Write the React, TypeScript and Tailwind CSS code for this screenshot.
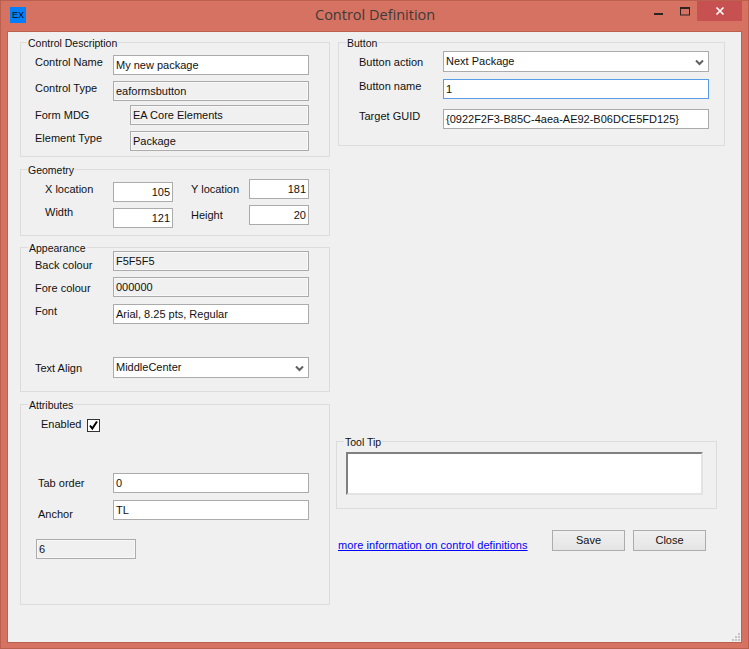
import type { ReactNode } from "react";

function Group({ title, className, legend = "left-[6px]", children }: { title: string; className: string; legend?: string; children?: ReactNode }) {
  return (
    <div className={`relative border border-[#dcdcdc] ${className}`}>
      <span className={`absolute -top-[7px] bg-[#f0f0f0] px-[1px] text-[10.5px] leading-[14px] text-[#111] ${legend}`}>{title}</span>
      {children}
    </div>
  );
}

function Box({ value, className = "", readOnly = false, right = false, focus = false }: { value: string; className?: string; readOnly?: boolean; right?: boolean; focus?: boolean }) {
  return (
    <div className={`h-[20px] shrink-0 border ${focus ? "border-[#569de5]" : "border-[#ababab]"} ${className}`}>
      <div className={`h-[18px] border px-[1px] text-[11px] leading-[16px] text-[#111] whitespace-nowrap overflow-hidden ${readOnly ? "border-[#f8f8f8] bg-[#f0f0f0]" : "border-white bg-white"} ${right ? "text-right" : ""}`}>
        {value}
      </div>
    </div>
  );
}

function Select({ value, className = "" }: { value: string; className?: string }) {
  return (
    <div className={`flex h-[21px] shrink-0 items-center justify-between border border-[#ababab] bg-white pl-[2px] pr-[3px] text-[11px] text-[#111] ${className}`}>
      <span>{value}</span>
      <svg width="9" height="7" viewBox="0 0 9 7" className="mt-[1px] mr-[1px]">
        <path d="M1 1.5 L4.5 5 L8 1.5" fill="none" stroke="#606060" strokeWidth="2" />
      </svg>
    </div>
  );
}

function Label({ text, className = "" }: { text: string; className?: string }) {
  return <span className={`h-[20px] shrink-0 whitespace-nowrap text-[11px] leading-[20px] text-[#111] ${className}`}>{text}</span>;
}

export default function App() {
  return (
    <div className="flex h-[649px] w-[749px] flex-col border border-[#b9604f] bg-[#d67262] font-['Liberation_Sans',Arial,sans-serif]">
      <div className="flex h-[30px] shrink-0 items-start">
        <div className="ml-[9px] mt-[6px] flex h-[16px] w-[16px] items-center justify-center bg-[#0080ff] text-[9px] leading-none text-black">EX</div>
        <div className="ml-[289px] mt-[4px] w-[124px] whitespace-nowrap font-['Open_Sans',sans-serif] text-[14.5px] leading-[20px] text-[#3d3a38]">Control Definition</div>
        <svg width="10" height="3" viewBox="0 0 10 3" className="ml-[215px] mt-[12px]">
          <rect width="9" height="2" y="0" fill="#2b2422" />
        </svg>
        <svg width="11" height="9" viewBox="0 0 11 9" className="ml-[16px] mt-[6px]">
          <rect x="0.5" y="0.5" width="9" height="7.5" fill="none" stroke="#2b2422" />
          <rect x="0" y="0" width="10" height="2" fill="#2b2422" />
        </svg>
        <div className="ml-[6px] flex h-[20px] w-[45px] items-center justify-center bg-[#c75050]">
          <svg width="10" height="10" viewBox="0 0 10 10">
            <path d="M1.5 1.5 L8.5 8.5 M8.5 1.5 L1.5 8.5" stroke="#fff" strokeWidth="1.7" />
          </svg>
        </div>
      </div>

      <div className="relative ml-[6px] flex h-[612px] w-[735px] border border-[#b9604f] bg-[#f0f0f0] pl-[12px] pt-[10px]">
        <div className="flex w-[310px] shrink-0 flex-col">
          <Group title="Control Description" className="h-[115px] pl-[14px] pt-[12px]">
            <div className="flex">
              <Label text="Control Name" className="-mt-[3px] w-[78px]" />
              <Box value="My new package" className="w-[196px]" />
            </div>
            <div className="mt-[6px] flex">
              <Label text="Control Type" className="-mt-[3px] w-[78px]" />
              <Box value="eaformsbutton" readOnly className="w-[196px]" />
            </div>
            <div className="mt-[4px] flex">
              <Label text="Form MDG" className="w-[95px]" />
              <Box value="EA Core Elements" readOnly className="w-[179px]" />
            </div>
            <div className="mt-[6px] flex">
              <Label text="Element Type" className="-mt-[3px] w-[95px]" />
              <Box value="Package" readOnly className="w-[179px]" />
            </div>
          </Group>

          <Group title="Geometry" className="mt-[12px] flex h-[67px] pl-[24px]">
            <div className="flex w-[146px] shrink-0 flex-col gap-[6px] pt-[12px]">
              <div className="flex">
                <Label text="X location" className="-mt-[3px] w-[68px]" />
                <Box value="105" right className="w-[60px]" />
              </div>
              <div className="flex">
                <Label text="Width" className="-mt-[6px] w-[68px]" />
                <Box value="121" right className="w-[60px]" />
              </div>
            </div>
            <div className="flex flex-col gap-[6px] pt-[9px]">
              <div className="flex">
                <Label text="Y location" className="w-[58px]" />
                <Box value="181" right className="w-[60px]" />
              </div>
              <div className="flex">
                <Label text="Height" className="w-[58px]" />
                <Box value="20" right className="w-[60px]" />
              </div>
            </div>
          </Group>

          <Group title="Appearance" legend="left-[7px]" className="mt-[11px] h-[145px] pl-[14px] pt-[3px]">
            <div className="flex">
              <Label text="Back colour" className="mt-[4px] -mb-[4px] w-[78px]" />
              <Box value="F5F5F5" readOnly className="w-[196px]" />
            </div>
            <div className="mt-[6px] flex">
              <Label text="Fore colour" className="mt-[1px] -mb-[1px] w-[78px]" />
              <Box value="000000" readOnly className="w-[196px]" />
            </div>
            <div className="mt-[7px] flex">
              <Label text="Font" className="-mt-[3px] w-[78px]" />
              <Box value="Arial, 8.25 pts, Regular" className="w-[196px]" />
            </div>
            <div className="mt-[33px] flex">
              <Label text="Text Align" className="mt-[1px] -mb-[1px] w-[78px]" />
              <Select value="MiddleCenter" className="w-[196px]" />
            </div>
          </Group>

          <Group title="Attributes" legend="left-[7px]" className="mt-[12px] h-[201px] pl-[15px]">
            <div className="ml-[5px] mt-[9px] flex items-start">
              <Label text="Enabled" className="w-[46px]" />
              <div className="mt-[5px] flex h-[13px] w-[13px] items-center justify-center border border-[#333] bg-white">
                <svg width="11" height="11" viewBox="0 0 11 11">
                  <path d="M2 5.5 L4.3 8.5 L9 1.5" fill="none" stroke="#000" strokeWidth="2" />
                </svg>
              </div>
            </div>
            <div className="mt-[39px] flex">
              <Label text="Tab order" className="w-[77px] pl-[2px]" />
              <Box value="0" className="w-[196px]" />
            </div>
            <div className="mt-[7px] flex">
              <Label text="Anchor" className="mt-[4px] -mb-[4px] w-[77px] pl-[2px]" />
              <Box value="TL" className="w-[196px]" />
            </div>
            <Box value="6" readOnly className="mt-[19px] w-[100px]" />
          </Group>
        </div>

        <div className="ml-[8px] flex w-[387px] shrink-0 flex-col">
          <Group title="Button" legend="left-[7px]" className="h-[104px] pl-[20px] pt-[8px]">
            <div className="flex">
              <Label text="Button action" className="mt-[1px] -mb-[1px] w-[84px]" />
              <Select value="Next Package" className="w-[266px]" />
            </div>
            <div className="mt-[7px] flex">
              <Label text="Button name" className="-mt-[3px] w-[84px]" />
              <Box value="1" focus className="w-[266px]" />
            </div>
            <div className="mt-[10px] flex">
              <Label text="Target GUID" className="-mt-[3px] w-[84px]" />
              <Box value="{0922F2F3-B85C-4aea-AE92-B06DCE5FD125}" className="w-[266px]" />
            </div>
          </Group>

          <Group title="Tool Tip" legend="left-[7px]" className="-ml-[2px] mt-[295px] h-[68px] w-[381px] pl-[9px] pt-[10px]">
            <div className="h-[43px] w-[357px] border-2 border-b-[#e3e3e3] border-l-[#808080] border-r-[#e3e3e3] border-t-[#808080] bg-white" />
          </Group>

          <div className="mt-[21px] flex items-start">
            <a className="mt-[8px] w-[189px] whitespace-nowrap text-[11px] leading-[15px] tracking-[0.08px] text-[#0000ff] underline">more information on control definitions</a>
            <button className="ml-[25px] h-[21px] w-[73px] border border-[#acacac] bg-gradient-to-b from-[#f0f0f0] to-[#e5e5e5] pb-[1px] text-[11px] leading-none text-[#111]">Save</button>
            <button className="ml-[8px] h-[21px] w-[73px] border border-[#acacac] bg-gradient-to-b from-[#f0f0f0] to-[#e5e5e5] pb-[1px] text-[11px] leading-none text-[#111]">Close</button>
          </div>
        </div>

        <svg width="10" height="10" viewBox="0 0 10 10" className="absolute bottom-0 right-0">
          <g fill="#c4c4c4">
            <rect x="7" y="1" width="2" height="2" />
            <rect x="4" y="4" width="2" height="2" />
            <rect x="7" y="4" width="2" height="2" />
            <rect x="1" y="7" width="2" height="2" />
            <rect x="4" y="7" width="2" height="2" />
            <rect x="7" y="7" width="2" height="2" />
          </g>
        </svg>
      </div>
    </div>
  );
}
